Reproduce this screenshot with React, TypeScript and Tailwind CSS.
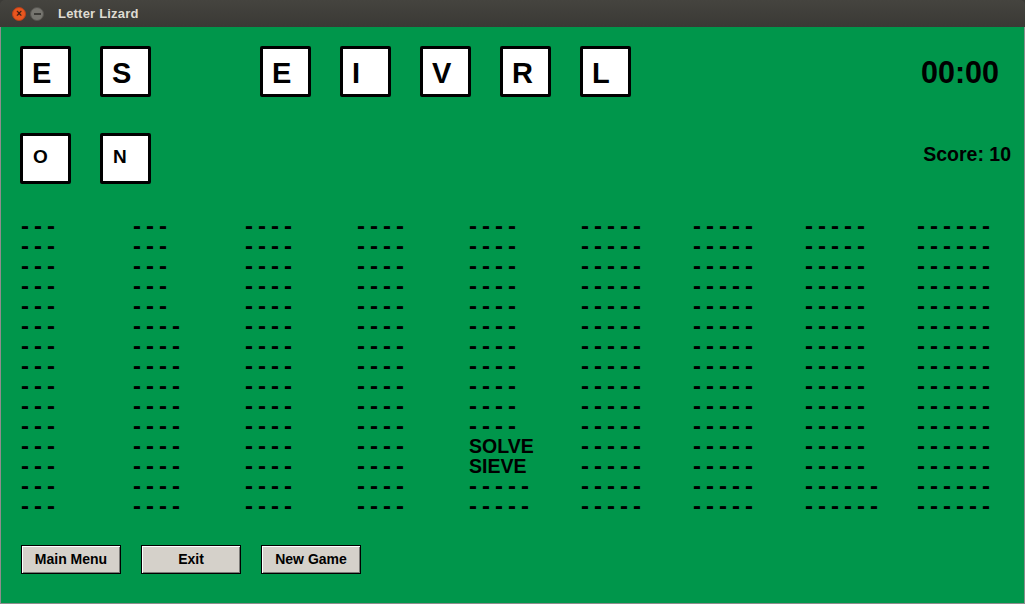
type Cell = number | string

/** Build a column: [count, length] runs, plus solved words in place */
function column(runs: [number, number][], words: Record<number, string> = {}): Cell[] {
  const out: Cell[] = []
  runs.forEach(([count, len]) => {
    for (let i = 0; i < count; i++) out.push(len)
  })
  Object.entries(words).forEach(([idx, w]) => {
    out[Number(idx)] = w
  })
  return out
}

const COLUMNS: Cell[][] = [
  column([[15, 3]]),
  column([[5, 3], [10, 4]]),
  column([[15, 4]]),
  column([[15, 4]]),
  column([[11, 4], [2, 5], [2, 5]], { 11: 'SOLVE', 12: 'SIEVE' }),
  column([[15, 5]]),
  column([[15, 5]]),
  column([[13, 5], [2, 6]]),
  column([[15, 6]]),
]

const TOP_TILES = ['E', 'S', '', 'E', 'I', 'V', 'R', 'L']
const BOTTOM_TILES = ['O', 'N']

function Tile({ letter, small }: { letter: string; small?: boolean }) {
  if (!letter) return <div className="w-[51px] h-[51px]" />
  return (
    <div
      className={
        small
          ? 'w-[51px] h-[51px] bg-white border-[3px] border-black rounded-[2px] flex items-center pl-[10px] pb-[5px] text-[19px] font-bold leading-none'
          : 'w-[51px] h-[51px] bg-white border-[3px] border-black rounded-[2px] flex items-center pl-[9px] pt-[4px] text-[29px] font-bold leading-none'
      }
    >
      {letter}
    </div>
  )
}

function WordSlot({ cell }: { cell: Cell }) {
  if (typeof cell === 'string') {
    return (
      <div className="h-[20px] text-[19.5px] font-bold leading-[14px] pt-[3px]">{cell}</div>
    )
  }
  return (
    <div className="h-[20px] text-[24px] font-bold leading-[20px] tracking-[5px]">
      {'-'.repeat(cell)}
    </div>
  )
}

function GameButton({ label }: { label: string }) {
  return (
    <button
      type="button"
      className="w-[100px] h-[29px] bg-[#d5d1ca] border border-black shadow-[inset_1px_1px_0_#ffffff,inset_-1px_-1px_0_#7c7a76] text-[14px] font-bold text-black flex items-center justify-center"
    >
      {label}
    </button>
  )
}

export default function App() {
  return (
    <div
      className="w-[1025px] h-[604px] flex flex-col bg-[#3c3b37] text-black"
      style={{ fontFamily: '"Liberation Sans", Arial, sans-serif' }}
    >
      {/* Title bar */}
      <div className="h-[27px] flex items-center bg-gradient-to-b from-[#45443f] to-[#3a3935] rounded-t-[5px]">
        <div className="ml-[12px] w-[14px] h-[14px] rounded-full bg-[#e8561f] border border-[#b8401a] flex items-center justify-center text-[#3a1a10] text-[10px] leading-none font-bold">
          ×
        </div>
        <div className="ml-[4px] w-[14px] h-[14px] rounded-full bg-[#76756f] border border-[#55544f] flex items-center justify-center">
          <div className="w-[7px] h-[2px] bg-[#3c3b37]" />
        </div>
        <span className="ml-[14px] text-[13px] font-bold text-[#dfdbd2] tracking-[0.2px]">Letter Lizard</span>
      </div>

      {/* Game board */}
      <div className="flex-1 flex flex-col bg-[#00964b] border-x border-b border-[#8d8d8d] pt-[19px]">
        <div className="flex items-center justify-between pl-[19px]">
          <div className="flex gap-[29px]">
            {TOP_TILES.map((l, i) => (
              <Tile key={i} letter={l} />
            ))}
          </div>
          <div className="mr-[25px] mt-[2px] text-[30.5px] font-bold leading-none">00:00</div>
        </div>

        <div className="flex items-center justify-between pl-[19px] mt-[36px]">
          <div className="flex gap-[29px]">
            {BOTTOM_TILES.map((l, i) => (
              <Tile key={i} letter={l} small />
            ))}
          </div>
          <div className="mr-[13px] mb-[8px] text-[19.5px] font-bold leading-none">Score: 10</div>
        </div>

        {/* Word list */}
        <div className="grid grid-cols-[repeat(9,112px)] pl-[20px] mt-[32px]">
          {COLUMNS.map((col, ci) => (
            <div key={ci} className="flex flex-col">
              {col.map((cell, ri) => (
                <WordSlot key={ri} cell={cell} />
              ))}
            </div>
          ))}
        </div>

        {/* Buttons */}
        <div className="flex gap-[20px] pl-[20px] mt-[29px]">
          <GameButton label="Main Menu" />
          <GameButton label="Exit" />
          <GameButton label="New Game" />
        </div>
      </div>
    </div>
  )
}
